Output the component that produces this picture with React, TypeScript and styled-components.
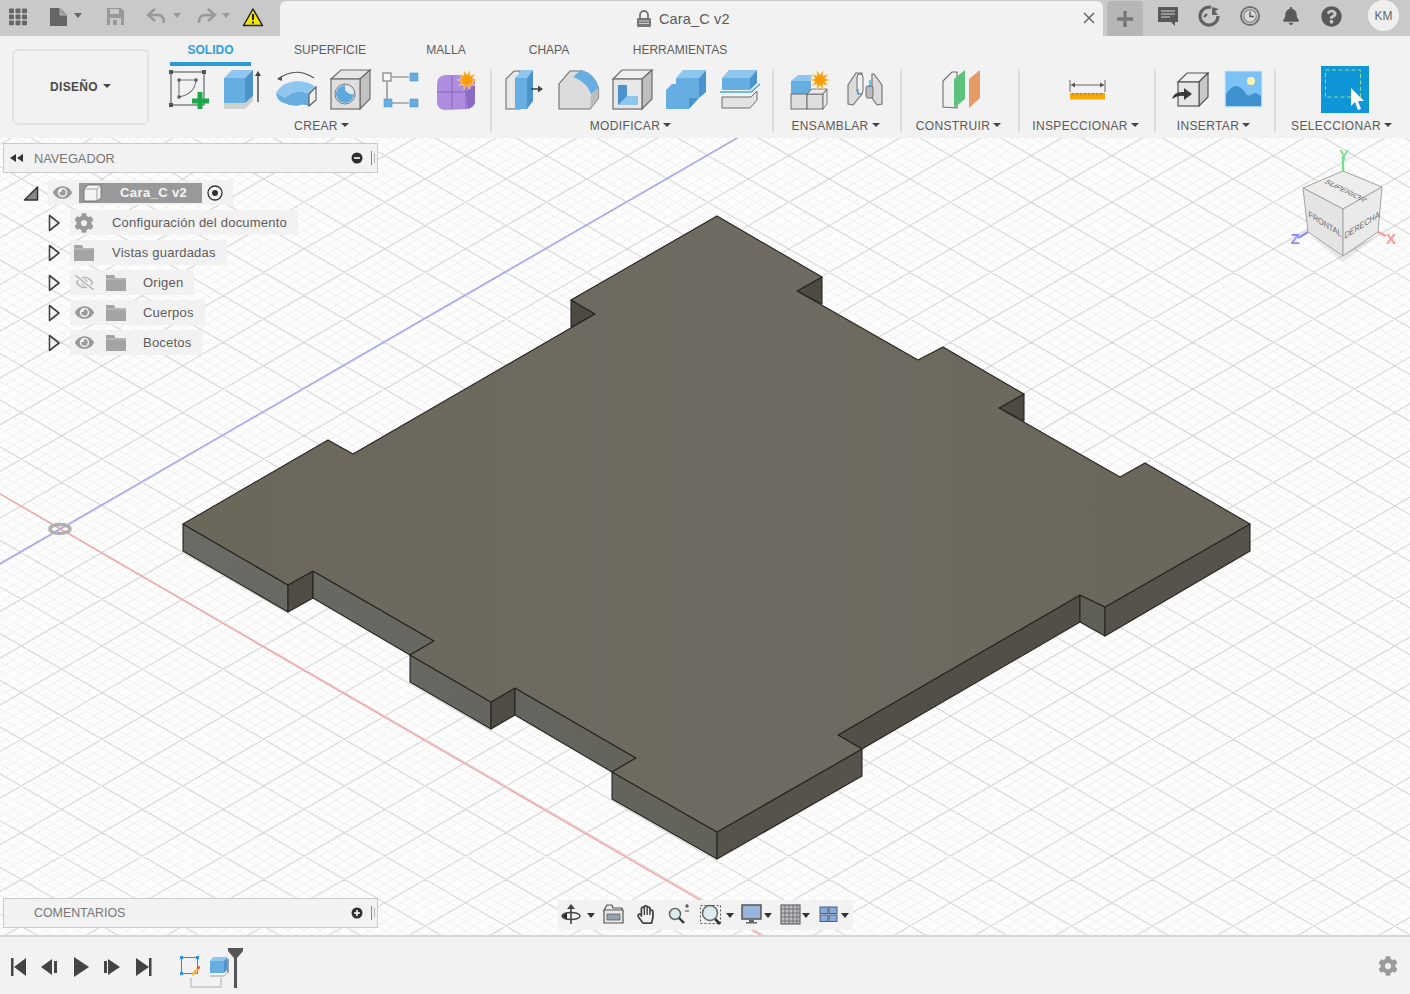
import React from 'react';
import styled, { createGlobalStyle } from 'styled-components';
import { FaCog, FaBell, FaQuestionCircle, FaEye, FaRegEyeSlash, FaRegHandPaper } from 'react-icons/fa';

const Global = createGlobalStyle`
  html, body { margin: 0; padding: 0; background: #f2f2f2; }
  body { font-family: "Liberation Sans", Arial, sans-serif; }
`;

const Page = styled.div`
  width: 1410px; height: 994px; display: flex; flex-direction: column; overflow: hidden;
  color: #555; font-size: 12px;
`;
const TitleBar = styled.div`
  height: 36px; flex: none; background: #c9c9c9; display: flex; align-items: stretch;
`;
const QuickTools = styled.div`width: 280px; display: flex; flex: none;`;
const DocTab = styled.div`
  width: 823px; flex: none; margin-top: 1px; background: #f2f2f2; border-radius: 6px 6px 0 0;
  display: flex; align-items: center; position: relative;
`;
const DocTitle = styled.div`
  margin-left: 356px; display: flex; align-items: center; gap: 7px; font-size: 14.5px; color: #5a5a5a; letter-spacing: .15px;
`;
const CloseX = styled.svg`position: absolute; right: 8px; top: 11px;`;
const PlusTile = styled.div`
  width: 36px; margin: 1px 0 0 4px; background: #b6b6b6; border-radius: 4px 4px 0 0; flex: none;
  display: flex; align-items: center; justify-content: center;
`;
const StatusIcons = styled.div`display: flex; align-items: flex-start; margin-left: 4px; flex: none;`;
const StatusSlot = styled.div`
  width: 41px; height: 32px; display: flex; align-items: center; justify-content: center; color: #595959;
`;
const Avatar = styled.div`
  width: 31px; height: 31px; margin: 0 0 0 16px; border-radius: 50%; background: #efefef; color: #666;
  font-size: 12px; display: flex; align-items: center; justify-content: center;
`;

const Toolbar = styled.div`
  height: 102px; flex: none; background: #f2f2f2; display: flex; padding-left: 12px; box-sizing: border-box;
`;
const DesignButton = styled.div`
  width: 137px; height: 76px; margin: 13px 7px 0 0; box-sizing: border-box; border: 2px solid #e2e2e2; border-radius: 6px;
  display: flex; align-items: center; justify-content: center; gap: 5px; font-weight: 700; color: #4a4a4a; font-size: 12px; letter-spacing: .3px;
`;
const Ribbon = styled.div`display: flex; flex-direction: column; flex: 1;`;
const Tabs = styled.div`display: flex; height: 30px; padding-left: 14px;`;
const Tab = styled.div<{ $w: number; $active?: boolean }>`
  width: ${p => p.$w}px; height: 30px; box-sizing: border-box; padding-top: 7px; text-align: center; color: ${p => (p.$active ? '#2f9fe0' : '#5d5d5d')};
  font-weight: ${p => (p.$active ? 700 : 400)};
  ${p => (p.$active ? 'border-bottom: 4px solid #2a9bd8;' : '')}
`;
const Groups = styled.div`display: flex;`;
const Group = styled.div<{ $w: number }>`
  width: ${p => p.$w}px; flex: none; display: flex; flex-direction: column; align-items: center;
`;
const IconRow = styled.div`display: flex; height: 48px;`;
const GroupLabel = styled.div`
  height: 24px; display: flex; align-items: center; gap: 3px; color: #5a5a5a; letter-spacing: .35px; white-space: nowrap; margin-right: 3px;
`;
const Caret = styled.span`
  width: 0; height: 0; border-left: 4px solid transparent; border-right: 4px solid transparent; border-top: 4.5px solid #444; margin-bottom: 2px;
`;
const Sep = styled.div`width: 2px; height: 63px; margin-top: 3px; background: #dedede; flex: none;`;

const Viewport = styled.div`flex: 1; position: relative; background: #fdfdfd; overflow: hidden;`;
const Scene = styled.svg`position: absolute; left: 0; top: 0; display: block;`;
const PanelHeader = styled.div<{ $top: number }>`
  position: absolute; left: 3px; top: ${p => p.$top}px; width: 375px; height: 30px; box-sizing: border-box;
  background: #f2f2f2; border: 1px solid #cbcbcb; display: flex; align-items: center; color: #777;
`;
const PanelTitle = styled.div<{ $size: number; $ml: number }>`
  font-size: ${p => p.$size}px; margin-left: ${p => p.$ml}px; flex: 1;
`;
const Tree = styled.div`position: absolute; left: 0; top: 42px; display: flex; flex-direction: column; gap: 5px;`;
const Row = styled.div<{ $pad: number }>`display: flex; height: 25px; padding-left: ${p => p.$pad}px; align-items: center;`;
const Expander = styled.svg`display: block; flex: none;`;
const Chip = styled.div<{ $pr?: number }>`
  height: 25px; background: rgba(241,241,241,.92); display: flex; align-items: center; padding-right: ${p => p.$pr ?? 11}px; color: #5c5c5c;
`;
const Cell = styled.div<{ $w: number; $dim?: boolean }>`
  width: ${p => p.$w}px; height: 25px; flex: none; display: flex; align-items: center; justify-content: center; color: #9a9a9a;
  opacity: ${p => (p.$dim ? 0.7 : 1)};
`;
const RootLabel = styled.div`
  width: 123px; height: 20px; margin-left: 3px; background: #999; color: #f5f5f5; font-weight: 700; font-size: 13px; letter-spacing: .4px;
  display: flex; align-items: center; padding-left: 4px; box-sizing: border-box; gap: 17px;
`;
const TreeText = styled.div<{ $ml: number }>`margin-left: ${p => p.$ml}px; white-space: nowrap; font-size: 13px; letter-spacing: .22px;`;
const NavBar = styled.div`
  position: absolute; left: 558px; top: 762px; height: 30px; display: flex; background: #f2f2f2;
`;
const Timeline = styled.div`
  height: 59px; flex: none; box-sizing: border-box; border-top: 2px solid #d6d6d6; background: #f2f2f2; display: flex; align-items: stretch; padding-left: 3px;
`;
const GearSlot = styled.div`margin-left: auto; width: 44px; display: flex; align-items: center; justify-content: center; color: #9b9b9b;`;

const Ico: React.FC<{ x: number; y: number; w: number; h: number; children: React.ReactNode }> = ({ x, y, w, h, children }) => (
  <svg width={w} height={h} viewBox={`${x} ${y} ${w} ${h}`} style={{ display: 'block', flex: 'none', overflow: 'visible' }}>{children}</svg>
);
const Slot: React.FC<{ x: number; children: React.ReactNode }> = ({ x, children }) => <Ico x={x} y={66} w={54} h={48}>{children}</Ico>;
const Tri: React.FC<{ x: number; y: number; c?: string }> = ({ x, y, c = '#666' }) => (
  <polygon points={`${x - 4},${y - 2} ${x + 4},${y - 2} ${x},${y + 3}`} fill={c} />
);
const Star: React.FC<{ cx: number; cy: number; r: number }> = ({ cx, cy, r }) => {
  const pts: string[] = [];
  for (let i = 0; i < 20; i++) {
    const a = (i * Math.PI) / 10;
    const d = i % 2 ? r * 0.5 : r;
    pts.push(`${cx + d * Math.cos(a)},${cy + d * Math.sin(a)}`);
  }
  return <polygon points={pts.join(' ')} fill="#f59d0a" stroke="#fbe3a4" strokeWidth=".6" />;
};
const B1 = '#66ade2', B2 = '#4b93cc', B3 = '#8ec6ef', E = '#6d6d6d';

const Folder: React.FC = () => (
  <svg width="22" height="18" viewBox="0 0 22 18"><path d="M1 1h8l1.5 3H21v13H1z" fill="#a4a4a4" /><path d="M1 5h20" stroke="#c6c6c6" strokeWidth="1" /></svg>
);
const Arrow: React.FC = () => (
  <Expander width="22" height="20" viewBox="0 0 22 20"><path d="M1.5 2.5 L1.5 17.5 L11 10 Z" fill="#f4f4f4" stroke="#444" strokeWidth="1.6" strokeLinejoin="round" /></Expander>
);
const grid = (() => {
  const K = 0.578, step = 46.7 / 5, vx = 910, vy = 739.3;
  const minor: string[] = [], major: string[] = [];
  for (let i = -140; i <= 160; i++) {
    const m = ((i % 5) + 5) % 5 === 0;
    const a = vy + i * step;
    (m ? major : minor).push(`M0 ${a - vx * K}L1410 ${a + (1410 - vx) * K}`);
    (m ? major : minor).push(`M0 ${a + vx * K}L1410 ${a - (1410 - vx) * K}`);
  }
  return { minor: minor.join(''), major: major.join('') };
})();

const topFace = '717,216 822,277 797,291 918,360 943,347 1024,394 999,408 1120,477 1145,463 1250,524 1105,607 1080,595 838,735 862,749 717,832 612,772 636,758 515,688 491,702 410,655 434,641 313,571 288,585 183,524 328,440 353,454 595,314 571,300';

const Model: React.FC = () => (
  <g stroke="#26251f" strokeWidth="1.1" strokeLinejoin="round">
    <polygon points="797,291 822,277 822,304" fill="#4c4a43" />
    <polygon points="571,300 595,314 571,327" fill="#4c4a43" />
    <polygon points="999,408 1024,394 1024,421" fill="#4c4a43" />
    <polygon points="183,524 288,585 288,612 183,551" fill="url(#wallL)" />
    <polygon points="288,585 313,571 313,598 288,612" fill="#4f4c45" />
    <polygon points="313,571 434,641 410,655 313,598" fill="url(#wallL)" />
    <polygon points="410,655 491,702 491,729 410,682" fill="url(#wallL)" />
    <polygon points="491,702 515,688 515,715 491,729" fill="#4f4c45" />
    <polygon points="515,688 636,758 612,772 515,715" fill="url(#wallL)" />
    <polygon points="612,772 717,832 717,859 612,799" fill="url(#wallL)" />
    <polygon points="717,832 862,749 862,776 717,859" fill="#55534b" />
    <polygon points="838,735 1080,595 1080,622 862,749" fill="#514f47" />
    <polygon points="1080,595 1105,607 1105,636 1080,622" fill="#5f5f58" />
    <polygon points="1105,607 1250,524 1250,551 1105,636" fill="#55534b" />
    <polygon points={topFace} fill="url(#face)" />
  </g>
);

const NavCube: React.FC = () => (
  <g>
    <polygon points="1310,236 1343,262 1376,238 1343,250" fill="#000" opacity=".08" />
    <polygon points="1343,171 1382,187 1343,209 1303,188" fill="#ededed" stroke="#a2a2a2" strokeWidth="1" />
    <polygon points="1303,188 1343,209 1343,256 1308,232" fill="#e4e4e4" stroke="#a2a2a2" strokeWidth="1" />
    <polygon points="1343,209 1382,187 1378,232 1343,256" fill="#eaeaea" stroke="#a2a2a2" strokeWidth="1" />
    <g fontFamily="Liberation Sans, sans-serif" fontSize="9" fill="#6a6a6a" textAnchor="middle">
      <text transform="matrix(.85 .42 -.85 .42 1343 192)">SUPERIOR</text>
      <text transform="matrix(.8 .5 0 1 1325 227)">FRONTAL</text>
      <text transform="matrix(.8 -.5 0 1 1362 228)">DERECHA</text>
    </g>
    <path d="M1343 171V156" stroke="#74dc8b" strokeWidth="2.4" />
    <path d="M1308 232L1298 238" stroke="#8f8ff2" strokeWidth="2.4" />
    <path d="M1378 232L1386 236" stroke="#f59a9a" strokeWidth="2.4" />
    <g fontFamily="Liberation Sans, sans-serif" fontSize="15" fontWeight="700" textAnchor="middle">
      <text x="1344" y="160" fill="#86e09b">Y</text>
      <text x="1295" y="244" fill="#8f8ff2">Z</text>
      <text x="1391" y="244" fill="#f59a9a">X</text>
    </g>
  </g>
);

export default function App() {
  return (
    <Page>
      <Global />
      <TitleBar>
        <QuickTools>
          <Ico x={0} y={0} w={36} h={36}>
            {[9, 15.5, 22].map(x => [8.5, 14.5, 20.5].map(y => <rect key={`${x}${y}`} x={x} y={y} width="5" height="4.7" rx=".8" fill="#666" />))}
          </Ico>
          <Ico x={36} y={0} w={59} h={36}>
            <path d="M50 8h10l7 7v11H50z" fill="#666" /><path d="M60 8v7h7" fill="#999" stroke="#c9c9c9" strokeWidth=".8" />
            <Tri x={78} y={15} />
          </Ico>
          <Ico x={95} y={0} w={41} h={36}>
            <path d="M107 8h14l3 3v14h-17z" fill="#999" /><rect x="110" y="9" width="9" height="5" fill="#c9c9c9" /><rect x="110" y="18" width="11" height="7" fill="#c9c9c9" /><rect x="113" y="20" width="4" height="5" fill="#999" />
          </Ico>
          <Ico x={136} y={0} w={50} h={36}>
            <path d="M150 15h8c4 0 6 3 6 8" fill="none" stroke="#999" strokeWidth="2.4" /><path d="M155 9l-7 6 7 6" fill="none" stroke="#999" strokeWidth="2.4" />
            <Tri x={177} y={15} c="#999" />
          </Ico>
          <Ico x={186} y={0} w={50} h={36}>
            <path d="M213 15h-8c-4 0-6 3-6 8" fill="none" stroke="#999" strokeWidth="2.4" /><path d="M208 9l7 6-7 6" fill="none" stroke="#999" strokeWidth="2.4" />
            <Tri x={226} y={15} c="#999" />
          </Ico>
          <Ico x={236} y={0} w={44} h={36}>
            <path d="M253 9L262.5 25.5H243.5Z" fill="#f2e600" stroke="#222" strokeWidth="1.5" strokeLinejoin="round" />
            <rect x="252" y="14" width="2" height="6" fill="#222" /><rect x="252" y="21.5" width="2" height="2" fill="#222" />
          </Ico>
        </QuickTools>
        <DocTab>
          <DocTitle>
            <svg width="16" height="18" viewBox="0 0 16 18"><path d="M4 8V5a4 4 0 0 1 8 0v3" fill="none" stroke="#777" strokeWidth="1.8" /><rect x="1" y="8" width="14" height="9" rx="1" fill="#777" /><path d="M3 11h10M3 13.5h10" stroke="#d9d9d9" strokeWidth=".9" /></svg>
            Cara_C v2
          </DocTitle>
          <CloseX width="12" height="12" viewBox="0 0 12 12"><path d="M1 1l10 10M11 1L1 11" stroke="#666" strokeWidth="1.5" /></CloseX>
        </DocTab>
        <PlusTile><svg width="16" height="16" viewBox="0 0 16 16"><path d="M8 0v16M0 8h16" stroke="#777" strokeWidth="3.4" /></svg></PlusTile>
        <StatusIcons>
          <StatusSlot>
            <svg width="22" height="21" viewBox="0 0 22 21"><path d="M1 1h20v15h-3v4l-4-4H1z" fill="#595959" /><path d="M4 5h14M4 8h14M4 11h9" stroke="#d5d5d5" strokeWidth="1.2" /></svg>
          </StatusSlot>
          <StatusSlot>
            <svg width="22" height="22" viewBox="0 0 22 22"><path d="M13 2.4A9 9 0 1 0 20 11" fill="none" stroke="#626262" strokeWidth="3.2" /><path d="M14 10 L14 2 L21 4 L17 6 L20 10Z" fill="#626262" /><path d="M6 12l3-3" stroke="#626262" strokeWidth="2.4" /></svg>
          </StatusSlot>
          <StatusSlot>
            <svg width="22" height="22" viewBox="0 0 22 22"><circle cx="11" cy="11" r="10" fill="#707070" /><circle cx="11" cy="11" r="8" fill="#cfcfcf" /><circle cx="11" cy="11" r="6.8" fill="#777" /><circle cx="11" cy="11" r="5.8" fill="#d9d9d9" /><path d="M11 6.5V11.5H15" fill="none" stroke="#555" strokeWidth="1.4" /></svg>
          </StatusSlot>
          <StatusSlot><FaBell size={18} /></StatusSlot>
          <StatusSlot><FaQuestionCircle size={21} /></StatusSlot>
          <Avatar>KM</Avatar>
        </StatusIcons>
      </TitleBar>

      <Toolbar>
        <DesignButton>DISEÑO <Caret /></DesignButton>
        <Ribbon>
          <Tabs>
            <Tab $w={81} $active>SOLIDO</Tab>
            <Tab $w={158}>SUPERFICIE</Tab>
            <Tab $w={74}>MALLA</Tab>
            <Tab $w={132}>CHAPA</Tab>
            <Tab $w={130}>HERRAMIENTAS</Tab>
          </Tabs>
          <Groups>
            <Group $w={334}>
              <IconRow>
                <Slot x={161}>
                  <rect x="171" y="72" width="33" height="33" fill="none" stroke="#666" strokeWidth="1.2" />
                  {[[171, 72], [204, 72], [171, 105]].map(([x, y]) => <rect key={x + '-' + y} x={x - 2} y={y - 2} width="4" height="4" fill="#555" />)}
                  <path d="M179 97V80H196Q195 94 179 97Z" fill="none" stroke="#777" strokeWidth="1.1" />
                  {[[179, 80], [196, 80], [179, 97]].map(([x, y]) => <rect key={x + '_' + y} x={x - 1.5} y={y - 1.5} width="3" height="3" fill="#555" />)}
                  <path d="M200 92v17M192 101h17" stroke="#1ea64b" strokeWidth="5" />
                </Slot>
                <Slot x={215}>
                  <path d="M224 103h21l8-7v5l-8 8h-21z" fill="#d0d0d0" />
                  <polygon points="224,78 245,78 245,103 224,103" fill={B1} />
                  <polygon points="224,78 232,70 253,70 245,78" fill={B3} />
                  <polygon points="245,78 253,70 253,96 245,103" fill={B2} />
                  <path d="M258 102V73" stroke="#444" strokeWidth="1.4" /><path d="M255 76l3-5 3 5z" fill="#444" />
                </Slot>
                <Slot x={269}>
                  <path d="M278 79Q296 66 314 78" fill="none" stroke="#555" strokeWidth="1.2" /><path d="M277 79l5-3 0 5z" fill="#555" />
                  <path d="M276 93Q282 82 297 81Q308 81 316 87L309 94Q296 88 285 98Z" fill={B3} />
                  <path d="M276 93Q277 101 284 103Q290 106 297 106Q303 103 309 106V94Q296 88 285 98Z" fill={B1} />
                  <path d="M309 94l7-7v13l-7 6z" fill="#f2f2f2" stroke="#555" strokeWidth="1.1" />
                </Slot>
                <Slot x={323}>
                  <polygon points="331,79 341,70 370,70 360,79" fill="#e6e6e6" stroke={E} strokeWidth="1.2" />
                  <polygon points="360,79 370,70 370,99 360,109" fill="#c2c2c2" stroke={E} strokeWidth="1.2" />
                  <rect x="331" y="79" width="29" height="30" fill="#dedede" stroke={E} strokeWidth="1.2" />
                  <circle cx="345" cy="94" r="10" fill="#f3f3f3" stroke="#777" /><circle cx="345" cy="94" r="9" fill="#5ea7dd" />
                  <path d="M345 85a9 9 0 0 1 9 9 9 9 0 0 1-9-4z" fill="#e8e8e8" />
                </Slot>
                <Slot x={377}>
                  <path d="M392 77h17M387 82v17M392 103h17" stroke="#777" strokeWidth="1.2" />
                  <rect x="383" y="73" width="8" height="8" fill="#f7f7f7" stroke="#666" />
                  <rect x="410" y="73" width="8" height="8" fill={B1} stroke="#4c97cf" strokeWidth=".6" />
                  <rect x="384" y="99" width="8" height="8" fill={B1} stroke="#4c97cf" strokeWidth=".6" />
                  <rect x="410" y="99" width="8" height="8" fill={B1} stroke="#4c97cf" strokeWidth=".6" />
                </Slot>
                <Slot x={431}>
                  <path d="M445 75h22a8 8 0 0 1 8 8v18q0 6-8 8l-22 1q-8-1-8-8V84q0-8 8-9z" fill="#ae8ce0" />
                  <path d="M466 92l9-8v17q0 6-7 8z" fill="#8a6ac2" />
                  <path d="M437 92h30M452 76v33M466 84v25" stroke="#8567bd" strokeWidth="1" fill="none" />
                  <Star cx={467} cy={80} r={10} />
                </Slot>
              </IconRow>
              <GroupLabel>CREAR <Caret /></GroupLabel>
            </Group>
            <Sep />
            <Group $w={280}>
              <IconRow>
                <Slot x={497}>
                  <path d="M506 79l8-8h6v38h-14z" fill="#e8e8e8" stroke={E} strokeWidth="1.1" />
                  <polygon points="515,78 522,70 533,70 527,78" fill={B3} />
                  <rect x="515" y="78" width="12" height="31" fill={B1} />
                  <polygon points="527,78 533,70 533,101 527,109" fill={B2} />
                  <path d="M531 89h9" stroke="#444" strokeWidth="1.6" /><path d="M538 85.5l5 3.5-5 3.5z" fill="#444" />
                </Slot>
                <Slot x={551}>
                  <path d="M559 109V84L570 71H582Q594 74 598.5 88V98L590 109Z" fill="#dcdcdc" stroke={E} strokeWidth="1.1" />
                  <path d="M573 77L581 70Q594 73 599 88L591 94Q587 82 573 77Z" fill={B1} />
                  <path d="M591 94L598.5 88V98L590 109Z" fill="#bdbdbd" />
                </Slot>
                <Slot x={605}>
                  <polygon points="613,79 622,70 652,70 642,79" fill="#eee" stroke={E} strokeWidth="1.2" />
                  <polygon points="642,79 652,70 652,99 642,109" fill="#bfbfbf" stroke={E} strokeWidth="1.2" />
                  <rect x="613" y="79" width="29" height="30" fill="#e7e7e7" stroke={E} strokeWidth="1.2" />
                  <rect x="618" y="85" width="9" height="20" fill={B2} />
                  <path d="M618 105l9-9h11v9z" fill={B3} />
                </Slot>
                <Slot x={659}>
                  <polygon points="676,78 683,70 706,70 699,78" fill={B3} />
                  <rect x="676" y="78" width="23" height="20" fill={B1} />
                  <polygon points="699,78 706,70 706,92 699,98" fill={B2} />
                  <polygon points="666,90 672,84 690,84 684,90" fill={B1} />
                  <rect x="666" y="90" width="23" height="19" fill={B1} />
                  <polygon points="689,98 699,98 689,109" fill={B2} />
                </Slot>
                <Slot x={713}>
                  <polygon points="722,78 729,70 757,70 750,78" fill={B3} />
                  <rect x="722" y="78" width="28" height="12" fill={B1} />
                  <polygon points="750,78 757,70 757,83 750,90" fill={B2} />
                  <path d="M720 92h31l9-8" fill="none" stroke="#4aa5e4" strokeWidth="1.6" />
                  <polygon points="722,97 751,97 757,91 757,100 750,108 722,108" fill="#e3e3e3" stroke={E} strokeWidth="1" />
                </Slot>
              </IconRow>
              <GroupLabel>MODIFICAR <Caret /></GroupLabel>
            </Group>
            <Sep />
            <Group $w={126}>
              <IconRow>
                <Slot x={783}>
                  <polygon points="791,81 798,75 812,75 811,81" fill={B3} />
                  <rect x="791" y="81" width="20" height="13" fill={B1} />
                  <rect x="791" y="94" width="16" height="15" fill="#dedede" stroke={E} />
                  <rect x="807" y="94" width="16" height="15" fill="#dedede" stroke={E} />
                  <path d="M807 94l5-5h15l-4 5zM823 94l4-5v15l-4 5z" fill="#e9e9e9" stroke={E} strokeWidth=".9" />
                  <Star cx={820} cy={80} r={10} />
                </Slot>
                <Slot x={837}>
                  <path d="M848 85l8-12h6v21l-9 11-5-1z" fill="#dcdcdc" stroke={E} strokeWidth="1.1" />
                  <path d="M882 85l-8-11-2 0v24l5 7 5-1z" fill="#dcdcdc" stroke={E} strokeWidth="1.1" />
                  <rect x="857" y="74" width="6" height="20" rx="3" fill="#f3f3f3" stroke={E} />
                  <rect x="866" y="86" width="7" height="12" rx="2" fill="#bbb" stroke={E} />
                  <path d="M858 89v6M870 80v7" stroke="#2b95e0" strokeWidth="1.2" />
                </Slot>
              </IconRow>
              <GroupLabel>ENSAMBLAR <Caret /></GroupLabel>
            </Group>
            <Sep />
            <Group $w={116}>
              <IconRow>
                <Slot x={933}>
                  <path d="M943 81l9-9h5v36l-14-1z" fill="#f0f0f0" stroke={E} strokeWidth="1.1" />
                  <path d="M954 108V79l11-9v29z" fill="#5cc27c" />
                  <path d="M969 108V79l11-9v28z" fill="#e69a66" />
                </Slot>
              </IconRow>
              <GroupLabel>CONSTRUIR <Caret /></GroupLabel>
            </Group>
            <Sep />
            <Group $w={134}>
              <IconRow>
                <Slot x={1060}>
                  <path d="M1070 80v12M1105 80v12M1071 85h33" stroke="#666" strokeWidth="1" />
                  <path d="M1071 85l4-2.5v5zM1104 85l-4-2.5v5z" fill="#555" />
                  <rect x="1070" y="93" width="35" height="6.5" fill="#f6a900" />
                  <path d="M1073 93v2M1077 93v2M1081 93v2M1085 93v2M1089 93v2M1093 93v2M1097 93v2M1101 93v2" stroke="#8a6a10" strokeWidth=".8" />
                </Slot>
              </IconRow>
              <GroupLabel>INSPECCIONAR <Caret /></GroupLabel>
            </Group>
            <Sep />
            <Group $w={118}>
              <IconRow>
                <Slot x={1161}>
                  <polygon points="1178,82 1187,73 1208,73 1199,82" fill="#f0f0f0" stroke="#555" strokeWidth="1.2" />
                  <polygon points="1199,82 1208,73 1208,97 1199,106" fill="#c9c9c9" stroke="#555" strokeWidth="1.2" />
                  <rect x="1178" y="82" width="21" height="24" fill="#e6e6e6" stroke="#555" strokeWidth="1.2" />
                  <path d="M1172 99q2-8 12-7v-4l8 6-8 6v-4q-6-1-12 3z" fill="#3a3a3a" />
                </Slot>
                <Slot x={1215}>
                  <rect x="1225" y="71" width="37" height="36" fill="#7cc2f7" stroke="#cfe7f7" />
                  <circle cx="1251" cy="81" r="4" fill="#fdf3b0" />
                  <path d="M1226 106V94q6-9 11-8 5 1 9 8 3 3 6 0 4-3 9 2v10z" fill="#3f92cd" />
                </Slot>
              </IconRow>
              <GroupLabel>INSERTAR <Caret /></GroupLabel>
            </Group>
            <Sep />
            <Group $w={134}>
              <IconRow>
                <Slot x={1316}>
                  <rect x="1321" y="66" width="48" height="47" fill="#0f96d9" />
                  <rect x="1325.5" y="70" width="35" height="27" fill="none" stroke="#8fe08a" strokeWidth="1" strokeDasharray="4 2.5" />
                  <path d="M1351 88v18l4-4 3 8 3-1-3-8h6z" fill="#fff" />
                </Slot>
              </IconRow>
              <GroupLabel>SELECCIONAR <Caret /></GroupLabel>
            </Group>
          </Groups>
        </Ribbon>
      </Toolbar>

      <Viewport>
        <Scene width="1410" height="797" viewBox="0 138 1410 797">
          <defs>
            <linearGradient id="face" x1="183" x2="1250" y1="0" y2="0" gradientUnits="userSpaceOnUse">
              <stop offset="0" stopColor="#6b675b" /><stop offset=".55" stopColor="#6f6b62" /><stop offset="1" stopColor="#6a665b" />
            </linearGradient>
            <linearGradient id="wallL" x1="183" x2="717" y1="0" y2="0" gradientUnits="userSpaceOnUse">
              <stop offset="0" stopColor="#6a6b65" /><stop offset="1" stopColor="#62625b" />
            </linearGradient>
          </defs>
          <path d={grid.minor} stroke="#f1f1f1" strokeWidth="1" fill="none" />
          <path d={grid.major} stroke="#d9d9d9" strokeWidth="1.2" fill="none" />
          <path d="M0 494L800 958" stroke="#f6a3a3" strokeWidth="1.4" />
          <path d="M-10 569.4L737 138" stroke="#a4a4f0" strokeWidth="1.4" />
          <ellipse cx="60" cy="529" rx="10" ry="4.5" fill="none" stroke="#b0b0b0" strokeWidth="3.5" />
          <Model />
          <NavCube />
        </Scene>

        <PanelHeader $top={5}>
          <svg width="14" height="10" viewBox="0 0 14 10" style={{ marginLeft: 6 }}><path d="M0 5l6-4v8zM7 5l6-4v8z" fill="#333" /></svg>
          <PanelTitle $size={12.8} $ml={10}>NAVEGADOR</PanelTitle>
          <svg width="12" height="12" viewBox="0 0 12 12" style={{ marginRight: 8 }}><circle cx="6" cy="6" r="5.5" fill="#2f2f2f" /><path d="M3 6h6" stroke="#fff" strokeWidth="1.6" /></svg>
          <svg width="4" height="14" viewBox="0 0 4 14" style={{ marginRight: 2 }}><path d="M.5 0v14" stroke="#888" /><path d="M3.5 2v10" stroke="#bbb" /></svg>
        </PanelHeader>
        <Tree>
          <Row $pad={23}>
            <Expander width="25" height="20" viewBox="0 0 25 20"><path d="M1.5 17L14.5 4V17Z" fill="#888" stroke="#333" strokeWidth="1.5" strokeLinejoin="round" /></Expander>
            <Chip $pr={6}>
              <Cell $w={28}><FaEye size={19} /></Cell>
              <RootLabel>
                <svg width="20" height="18" viewBox="0 0 20 18"><path d="M1 5l4-4h13v13l-4 3H1z" fill="#f4f4f4" stroke="#666" strokeWidth=".8" /><path d="M1 5h13v12M14 5l4-4" fill="none" stroke="#888" strokeWidth=".8" /></svg>
                Cara_C v2
              </RootLabel>
              <Cell $w={25}>
                <svg width="16" height="16" viewBox="0 0 16 16"><circle cx="8" cy="8" r="7" fill="#f6f6f6" stroke="#333" strokeWidth="1.3" /><circle cx="8" cy="8" r="3" fill="#333" /></svg>
              </Cell>
            </Chip>
          </Row>
          <Row $pad={48}><Arrow /><Chip><Cell $w={28}><FaCog size={20} /></Cell><TreeText $ml={14}>Configuración del documento</TreeText></Chip></Row>
          <Row $pad={48}><Arrow /><Chip><Cell $w={28}><Folder /></Cell><TreeText $ml={14}>Vistas guardadas</TreeText></Chip></Row>
          <Row $pad={48}><Arrow /><Chip><Cell $w={28} $dim><FaRegEyeSlash size={19} /></Cell><Cell $w={36}><Folder /></Cell><TreeText $ml={9}>Origen</TreeText></Chip></Row>
          <Row $pad={48}><Arrow /><Chip><Cell $w={28}><FaEye size={19} /></Cell><Cell $w={36}><Folder /></Cell><TreeText $ml={9}>Cuerpos</TreeText></Chip></Row>
          <Row $pad={48}><Arrow /><Chip><Cell $w={28}><FaEye size={19} /></Cell><Cell $w={36}><Folder /></Cell><TreeText $ml={9}>Bocetos</TreeText></Chip></Row>
        </Tree>

        <PanelHeader $top={760}>
          <PanelTitle $size={12.4} $ml={30}>COMENTARIOS</PanelTitle>
          <svg width="12" height="12" viewBox="0 0 12 12" style={{ marginRight: 8 }}><circle cx="6" cy="6" r="5.5" fill="#2f2f2f" /><path d="M3 6h6M6 3v6" stroke="#fff" strokeWidth="1.6" /></svg>
          <svg width="4" height="14" viewBox="0 0 4 14" style={{ marginRight: 2 }}><path d="M.5 0v14" stroke="#888" /><path d="M3.5 2v10" stroke="#bbb" /></svg>
        </PanelHeader>

        <NavBar>
          <Ico x={558} y={900} w={44} h={30}>
            <path d="M571 905v19" stroke="#444" strokeWidth="1.6" /><path d="M567 909l4-5 4 5z" fill="#444" />
            <ellipse cx="571" cy="916" rx="9" ry="3.5" fill="none" stroke="#444" strokeWidth="1.5" /><path d="M562 916l5-3v6z" fill="#222" />
            <Tri x={591} y={915} c="#333" />
          </Ico>
          <Ico x={602} y={900} w={27} h={30}>
            <path d="M604 910l3-5h5l1 3h9v2zM604 910h19v13h-19z" fill="#e8e8e8" stroke="#555" strokeWidth="1.2" />
            <rect x="607" y="914" width="13" height="6" fill="#97a0ad" stroke="#555" strokeWidth=".7" />
          </Ico>
          <Ico x={629} y={900} w={32} h={30}>
            <g transform="translate(636 905)" color="#444"><FaRegHandPaper size={19} /></g>
          </Ico>
          <Ico x={661} y={900} w={32} h={30}>
            <circle cx="675" cy="914" r="5.5" fill="#dcebf0" stroke="#666" strokeWidth="1.5" /><path d="M679 918l5 5" stroke="#333" strokeWidth="2.4" />
            <path d="M685 906h4M687 904v4M685 911h4" stroke="#444" strokeWidth="1.1" />
          </Ico>
          <Ico x={693} y={900} w={44} h={30}>
            <rect x="700.5" y="905.5" width="20" height="18" fill="none" stroke="#555" strokeDasharray="2 2" />
            <circle cx="710" cy="913" r="7.5" fill="#dcebf0" stroke="#666" strokeWidth="1.5" /><path d="M715 919l5 5" stroke="#333" strokeWidth="2.6" />
            <Tri x={730} y={915} c="#333" />
          </Ico>
          <Ico x={737} y={900} w={38} h={30}>
            <rect x="742" y="905" width="19" height="14" fill="#97b5da" stroke="#555" strokeWidth="1.5" /><path d="M749 920h5v2h3v1.5h-11V922h3z" fill="#666" />
            <Tri x={768} y={915} c="#333" />
          </Ico>
          <Ico x={775} y={900} w={38} h={30}>
            <rect x="781" y="905" width="19" height="19" fill="#bdbdc4" stroke="#666" strokeWidth="1.2" />
            <path d="M785 905v19M789 905v19M793 905v19M797 905v19M781 909h19M781 913h19M781 917h19M781 921h19" stroke="#666" strokeWidth=".8" />
            <Tri x={806} y={915} c="#333" />
          </Ico>
          <Ico x={813} y={900} w={40} h={30}>
            <rect x="820" y="907" width="8" height="6.5" fill="#86abdc" stroke="#4a5f80" /><rect x="829" y="907" width="8" height="6.5" fill="#86abdc" stroke="#4a5f80" />
            <rect x="820" y="915" width="8" height="6.5" fill="#86abdc" stroke="#4a5f80" /><rect x="829" y="915" width="8" height="6.5" fill="#86abdc" stroke="#4a5f80" />
            <Tri x={845} y={915} c="#333" />
          </Ico>
        </NavBar>
      </Viewport>

      <Timeline>
        <Ico x={3} y={937} w={31} h={57}><rect x="11" y="958" width="2.5" height="18" fill="#444" /><polygon points="14,967 26,958 26,976" fill="#444" /></Ico>
        <Ico x={34} y={937} w={31} h={57}><polygon points="41,967 52,959 52,975" fill="#444" /><rect x="54" y="961" width="3" height="12" fill="#444" /></Ico>
        <Ico x={65} y={937} w={32} h={57}><polygon points="74,957 89,967 74,977" fill="#444" /></Ico>
        <Ico x={97} y={937} w={31} h={57}><rect x="104" y="961" width="3" height="12" fill="#444" /><polygon points="108,959 120,967 108,975" fill="#444" /></Ico>
        <Ico x={128} y={937} w={32} h={57}><polygon points="136,958 149,967 136,976" fill="#444" /><rect x="149" y="958" width="2.5" height="18" fill="#444" /></Ico>
        <Ico x={160} y={937} w={90} h={57}>
          <rect x="181.5" y="957.5" width="16" height="16" fill="none" stroke="#777" />
          <rect x="180" y="956" width="3" height="3" fill="#2d8fe0" /><rect x="196" y="956" width="3" height="3" fill="#2d8fe0" /><rect x="180" y="972" width="3" height="3" fill="#2d8fe0" />
          <path d="M192 975l6-6" stroke="#eebb44" strokeWidth="3" /><circle cx="198.5" cy="967.5" r="1.6" fill="#e8524a" />
          <polygon points="210,961 213,957 227,957 224,961" fill={B3} /><rect x="210" y="961" width="14" height="12" fill={B1} /><polygon points="224,961 227,957 227,970 224,973" fill={B2} />
          <path d="M210 975h14l3-3v2l-3 3h-14z" fill="#c9c9c9" /><path d="M228 973v-14" stroke="#444" strokeWidth="1" />
          <path d="M191 978v9h30v-9" fill="none" stroke="#cfcfcf" strokeWidth="2" />
          <polygon points="228,948 243,948 243,951 237,958 237,988 234,988 234,958 228,951" fill="#555" />
        </Ico>
        <GearSlot><FaCog size={20} /></GearSlot>
      </Timeline>
    </Page>
  );
}
